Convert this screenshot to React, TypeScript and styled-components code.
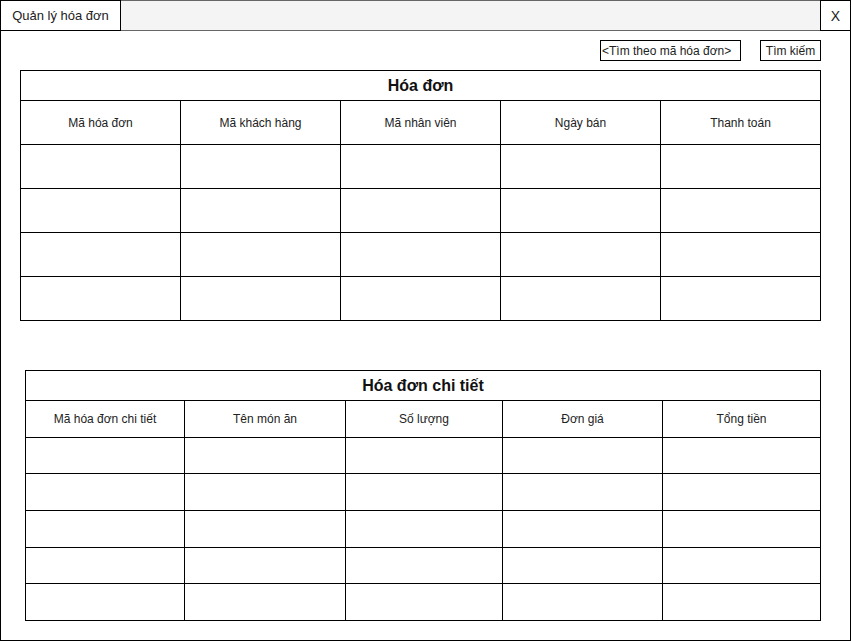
import React from 'react';
import styled, { createGlobalStyle } from 'styled-components';

const GlobalStyle = createGlobalStyle`
  * { box-sizing: border-box; }
  body {
    margin: 0;
    background: #ffffff;
    font-family: "Liberation Sans", Arial, sans-serif;
    color: #222;
  }
`;

/* window */
const Window = styled.div`
  width: 851px;
  height: 641px;
  display: flex;
  flex-direction: column;
`;

/* top tab bar */
const TopBar = styled.div`
  display: flex;
  height: 31px;
  flex-shrink: 0;
`;

const Tab = styled.div`
  width: 121px;
  height: 31px;
  border: 1px solid #000;
  background: #fff;
  display: flex;
  align-items: center;
  justify-content: center;
  font-size: 13px;
  color: #222;
`;

const BarFill = styled.div`
  flex: 1;
  height: 31px;
  background: #f4f4f4;
  border-top: 1px solid #666;
  border-bottom: 1px solid #666;
`;

const CloseBtn = styled.div`
  width: 31px;
  height: 31px;
  border: 1px solid #000;
  background: #fff;
  display: flex;
  align-items: center;
  justify-content: center;
  font-size: 14px;
  color: #222;
`;

/* body */
const Body = styled.div`
  flex: 1;
  border: 1px solid #000;
  border-top: none;
  padding: 9px 29px 0 0;
  display: flex;
  flex-direction: column;
`;

const SearchRow = styled.div`
  display: flex;
  justify-content: flex-end;
  gap: 19px;
`;

const SearchInput = styled.div`
  width: 141px;
  height: 21px;
  border: 1px solid #000;
  font-size: 12px;
  padding-left: 1px;
  display: flex;
  align-items: center;
  color: #222;
`;

const SearchBtn = styled.div`
  width: 61px;
  height: 21px;
  border: 1px solid #000;
  font-size: 12px;
  display: flex;
  align-items: center;
  justify-content: center;
  color: #222;
`;

/* tables */
const Grid = styled.div<{ $cols: string; $rows: string; $left: number; $top: number }>`
  display: grid;
  grid-template-columns: ${({ $cols }) => $cols};
  grid-template-rows: ${({ $rows }) => $rows};
  gap: 1px;
  padding: 1px;
  background: #000;
  align-self: flex-start;
  margin-left: ${({ $left }) => $left}px;
  margin-top: ${({ $top }) => $top}px;
`;

const TitleCell = styled.div`
  grid-column: 1 / -1;
  background: #fff;
  display: flex;
  align-items: center;
  justify-content: center;
  font-size: 16px;
  font-weight: 700;
  color: #111;
`;

const HeadCell = styled.div`
  background: #fff;
  display: flex;
  align-items: center;
  justify-content: center;
  font-size: 12px;
  color: #222;
`;

const Cell = styled.div`
  background: #fff;
`;

type TableProps = {
  title: string;
  heads: string[];
  cols: string;
  rows: string;
  rowCount: number;
  left: number;
  top: number;
};

function DataTable({ title, heads, cols, rows, rowCount, left, top }: TableProps) {
  return (
    <Grid $cols={cols} $rows={rows} $left={left} $top={top}>
      <TitleCell>{title}</TitleCell>
      {heads.map((h) => (
        <HeadCell key={h}>{h}</HeadCell>
      ))}
      {Array.from({ length: rowCount * heads.length }).map((_, i) => (
        <Cell key={i} />
      ))}
    </Grid>
  );
}

export default function App() {
  return (
    <>
      <GlobalStyle />
      <Window>
        <TopBar>
          <Tab>Quản lý hóa đơn</Tab>
          <BarFill />
          <CloseBtn>X</CloseBtn>
        </TopBar>
        <Body>
          <SearchRow>
            <SearchInput>&lt;Tìm theo mã hóa đơn&gt;</SearchInput>
            <SearchBtn>Tìm kiếm</SearchBtn>
          </SearchRow>
          <DataTable
            title="Hóa đơn"
            heads={['Mã hóa đơn', 'Mã khách hàng', 'Mã nhân viên', 'Ngày bán', 'Thanh toán']}
            cols="repeat(5, 159px)"
            rows="29px repeat(5, 43px)"
            rowCount={4}
            left={19}
            top={9}
          />
          <DataTable
            title="Hóa đơn chi tiết"
            heads={['Mã hóa đơn chi tiết', 'Tên món ăn', 'Số lượng', 'Đơn giá', 'Tổng tiền']}
            cols="158px 160px 156px 159px 157px"
            rows="29px 36px 35px 36px 36px 35px 36px"
            rowCount={5}
            left={24}
            top={49}
          />
        </Body>
      </Window>
    </>
  );
}
